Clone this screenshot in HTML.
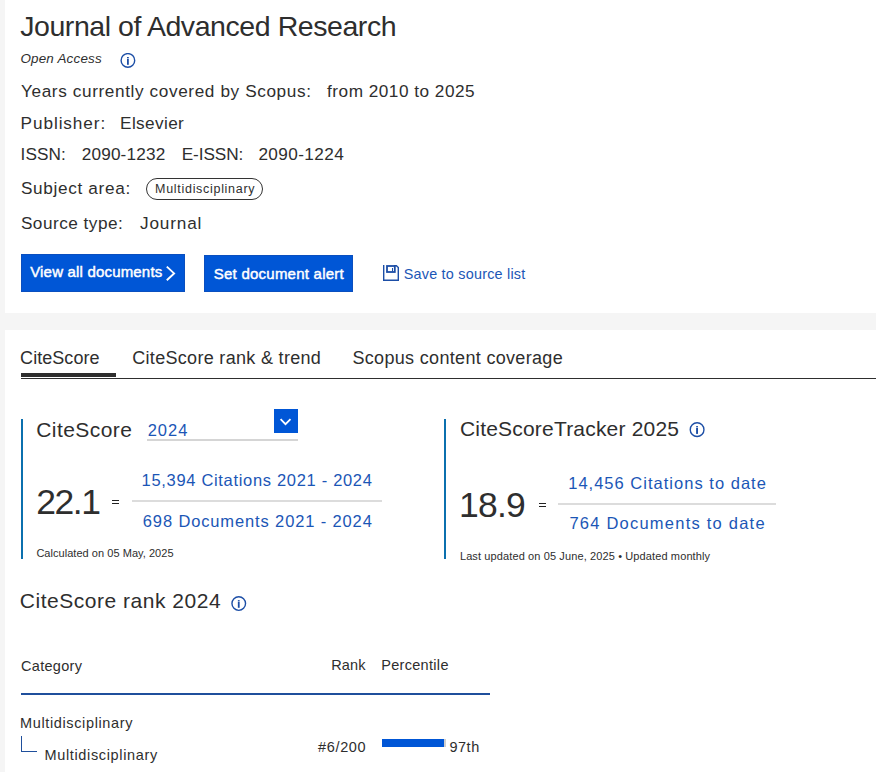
<!DOCTYPE html>
<html><head><meta charset="utf-8">
<style>
*{margin:0;padding:0;box-sizing:border-box}
html,body{width:876px;height:772px;overflow:hidden;background:#f5f5f5;font-family:"Liberation Sans",sans-serif;color:#2e2e2e}
.a{position:absolute}
.t{position:absolute;white-space:nowrap;line-height:1}
</style></head><body>
<div class="a" style="left:5px;top:0;width:871px;height:313px;background:#fff"></div>
<div class="a" style="left:5px;top:330px;width:871px;height:442px;background:#fff"></div>
<!-- pill -->
<div class="a" style="left:146px;top:178px;width:117px;height:22px;border:1px solid #333;border-radius:11px"></div>
<!-- buttons -->
<div class="a" style="left:21px;top:254px;width:164px;height:38px;background:#0056d6;box-shadow:inset 0 0 0 1px #0a4fbf"></div>
<div class="a" style="left:204px;top:255px;width:149px;height:37px;background:#0056d6;box-shadow:inset 0 0 0 1px #0a4fbf"></div>
<!-- tabs -->
<div class="a" style="left:21px;top:373px;width:95px;height:4px;background:#2e2e2e"></div>
<div class="a" style="left:21px;top:378px;width:855px;height:1px;background:#2e2e2e"></div>
<!-- citescore box -->
<div class="a" style="left:21px;top:419px;width:2px;height:140px;background:#0b70ae"></div>
<div class="a" style="left:147px;top:439px;width:151px;height:2px;background:#d5d5d5"></div>
<div class="a" style="left:274px;top:409px;width:24px;height:24px;background:#0056d6"></div>
<div class="a" style="left:132px;top:500px;width:250px;height:2px;background:#dcdcdc"></div>
<div class="a" style="left:444px;top:419px;width:2px;height:140px;background:#0b70ae"></div>
<div class="a" style="left:558px;top:503px;width:218px;height:2px;background:#dcdcdc"></div>
<!-- rank -->
<div class="a" style="left:21px;top:693px;width:469px;height:2px;background:#1f4f9c"></div>
<div class="a" style="left:382px;top:739px;width:62px;height:8px;background:#0056d6"></div>
<div class="a" style="left:444px;top:739px;width:1.5px;height:8px;background:#cfcfcf"></div>
<!-- equals -->
<div class="a" style="left:112.4px;top:500px;width:6.8px;height:1.1px;background:#222"></div>
<div class="a" style="left:112.4px;top:503px;width:6.8px;height:1.1px;background:#222"></div>
<div class="a" style="left:539px;top:503px;width:7px;height:1.1px;background:#222"></div>
<div class="a" style="left:539px;top:506px;width:7px;height:1.1px;background:#222"></div>
<!-- info icons -->
<svg class="a" style="left:120px;top:53px" width="16" height="16" viewBox="0 0 16 16"><circle cx="7.9" cy="7.4" r="6.8" fill="none" stroke="#1c4ea6" stroke-width="1.4"/><rect x="7" y="4" width="1.8" height="1" fill="#1c4ea6"/><rect x="7" y="5.6" width="1.8" height="6.2" fill="#1c4ea6"/></svg>
<svg class="a" style="left:689px;top:422px" width="16" height="16" viewBox="0 0 16 16"><circle cx="8.1" cy="7.65" r="6.85" fill="none" stroke="#1c4ea6" stroke-width="1.4"/><rect x="7.1" y="4.1" width="1.9" height="0.9" fill="#1c4ea6"/><rect x="7.1" y="5.6" width="1.9" height="6.3" fill="#1c4ea6"/></svg>
<svg class="a" style="left:231px;top:596px" width="16" height="16" viewBox="0 0 16 16"><circle cx="7.75" cy="7.55" r="6.8" fill="none" stroke="#1c4ea6" stroke-width="1.4"/><rect x="6.85" y="4" width="1.8" height="0.9" fill="#1c4ea6"/><rect x="6.85" y="5.5" width="1.8" height="6.3" fill="#1c4ea6"/></svg>
<!-- save icon -->
<svg class="a" style="left:378px;top:260px" width="26" height="26" viewBox="0 0 26 26"><path d="M5.7 5 V20.2 H20.3 V7.6 L18.4 5.7 H16" fill="none" stroke="#1c4ea6" stroke-width="1.4"/><rect x="9" y="6" width="7.8" height="6" fill="none" stroke="#1c4ea6" stroke-width="1.8"/><rect x="14" y="8" width="1" height="3.5" fill="#1c4ea6"/></svg>
<!-- chevrons -->
<svg class="a" style="left:155px;top:258px" width="30" height="30" viewBox="0 0 30 30"><path d="M11.8 8.6 L19.1 15.4 L11.8 22.3" fill="none" stroke="#fff" stroke-width="1.9"/></svg>
<svg class="a" style="left:270px;top:405px" width="32" height="32" viewBox="0 0 32 32"><path d="M10.6 14.2 L15.5 19.2 L20.5 14.2" fill="none" stroke="#fff" stroke-width="1.8"/></svg>
<!-- tree connector -->
<div class="a" style="left:21px;top:736px;width:1.1px;height:16px;background:#1f4f9c"></div>
<div class="a" style="left:21px;top:750.8px;width:16px;height:1.1px;background:#1f4f9c"></div>
<div id="title" class="t" style="left:20.20px;top:11.86px;font-size:28.5px;color:#2e2e2e;letter-spacing:-0.437px">Journal of Advanced Research</div>
<div id="oa" class="t" style="left:20.40px;top:51.65px;font-size:13.4px;color:#2e2e2e;letter-spacing:0.220px;font-style:italic">Open Access</div>
<div id="y1" class="t" style="left:21.00px;top:82.73px;font-size:17.2px;color:#2e2e2e;letter-spacing:0.612px">Years currently covered by Scopus:</div>
<div id="y2" class="t" style="left:327.10px;top:82.73px;font-size:17.2px;color:#2e2e2e;letter-spacing:0.500px">from 2010 to 2025</div>
<div id="p1" class="t" style="left:20.60px;top:115.13px;font-size:17.2px;color:#2e2e2e;letter-spacing:0.911px">Publisher:</div>
<div id="p2" class="t" style="left:120.10px;top:115.13px;font-size:17.2px;color:#2e2e2e;letter-spacing:0.371px">Elsevier</div>
<div id="i1" class="t" style="left:20.60px;top:146.43px;font-size:17.2px;color:#2e2e2e;letter-spacing:0.050px">ISSN:</div>
<div id="i2" class="t" style="left:81.70px;top:146.43px;font-size:17.2px;color:#2e2e2e;letter-spacing:0.175px">2090-1232</div>
<div id="i3" class="t" style="left:181.70px;top:146.43px;font-size:17.2px;color:#2e2e2e;letter-spacing:-0.067px">E-ISSN:</div>
<div id="i4" class="t" style="left:258.40px;top:146.43px;font-size:17.2px;color:#2e2e2e;letter-spacing:0.400px">2090-1224</div>
<div id="s1" class="t" style="left:20.90px;top:179.73px;font-size:17.2px;color:#2e2e2e;letter-spacing:0.667px">Subject area:</div>
<div id="pill" class="t" style="left:155.10px;top:182.81px;font-size:12.5px;color:#2e2e2e;letter-spacing:0.700px">Multidisciplinary</div>
<div id="st1" class="t" style="left:20.90px;top:215.03px;font-size:17.2px;color:#2e2e2e;letter-spacing:0.491px">Source type:</div>
<div id="st2" class="t" style="left:140.00px;top:215.03px;font-size:17.2px;color:#2e2e2e;letter-spacing:0.833px">Journal</div>
<div id="b1" class="t" style="left:30.20px;top:264.49px;font-size:15px;color:#ffffff;letter-spacing:0.182px;-webkit-text-stroke:0.45px #ffffff">View all documents</div>
<div id="b2" class="t" style="left:213.80px;top:265.69px;font-size:15px;color:#ffffff;letter-spacing:0.235px;-webkit-text-stroke:0.45px #ffffff">Set document alert</div>
<div id="sv" class="t" style="left:403.70px;top:266.90px;font-size:14.4px;color:#1b56b6;letter-spacing:0.222px">Save to source list</div>
<div id="t1" class="t" style="left:20.10px;top:348.85px;font-size:18px;color:#2e2e2e;letter-spacing:0.050px">CiteScore</div>
<div id="t2" class="t" style="left:132.20px;top:348.85px;font-size:18px;color:#2e2e2e;letter-spacing:0.314px">CiteScore rank &amp; trend</div>
<div id="t3" class="t" style="left:352.40px;top:348.85px;font-size:18px;color:#2e2e2e;letter-spacing:0.327px">Scopus content coverage</div>
<div id="c1" class="t" style="left:36.20px;top:418.81px;font-size:21px;color:#2e2e2e;letter-spacing:0.450px">CiteScore</div>
<div id="c2" class="t" style="left:147.70px;top:421.92px;font-size:16.5px;color:#1b56b6;letter-spacing:1.000px">2024</div>
<div id="c3" class="t" style="left:36.20px;top:484.73px;font-size:35.5px;color:#2e2e2e;letter-spacing:-1.467px">22.1</div>
<div id="c4" class="t" style="left:141.60px;top:472.02px;font-size:16.5px;color:#1b56b6;letter-spacing:0.681px">15,394 Citations 2021 - 2024</div>
<div id="c5" class="t" style="left:142.80px;top:512.72px;font-size:16.5px;color:#1b56b6;letter-spacing:0.867px">698 Documents 2021 - 2024</div>
<div id="c6" class="t" style="left:36.40px;top:547.78px;font-size:11px;color:#2e2e2e;letter-spacing:0.040px">Calculated on 05 May, 2025</div>
<div id="r1" class="t" style="left:460.00px;top:418.11px;font-size:21px;color:#2e2e2e;letter-spacing:0.190px">CiteScoreTracker 2025</div>
<div id="r2" class="t" style="left:459.10px;top:488.03px;font-size:35.5px;color:#2e2e2e;letter-spacing:-0.800px">18.9</div>
<div id="r3" class="t" style="left:568.20px;top:475.02px;font-size:16.5px;color:#1b56b6;letter-spacing:1.017px">14,456 Citations to date</div>
<div id="r4" class="t" style="left:569.40px;top:515.22px;font-size:16.5px;color:#1b56b6;letter-spacing:1.230px">764 Documents to date</div>
<div id="r5" class="t" style="left:459.90px;top:551.08px;font-size:11px;color:#2e2e2e;letter-spacing:0.117px">Last updated on 05 June, 2025 • Updated monthly</div>
<div id="k1" class="t" style="left:19.80px;top:589.51px;font-size:21px;color:#2e2e2e;letter-spacing:0.522px">CiteScore rank 2024</div>
<div id="h1" class="t" style="left:21.10px;top:658.62px;font-size:14.5px;color:#2e2e2e;letter-spacing:0.286px">Category</div>
<div id="h2" class="t" style="left:331.20px;top:658.22px;font-size:14.5px;color:#2e2e2e;letter-spacing:0.133px">Rank</div>
<div id="h3" class="t" style="left:381.20px;top:658.22px;font-size:14.5px;color:#2e2e2e;letter-spacing:0.311px">Percentile</div>
<div id="m1" class="t" style="left:20.10px;top:716.22px;font-size:14.5px;color:#2e2e2e;letter-spacing:0.625px">Multidisciplinary</div>
<div id="m2" class="t" style="left:44.50px;top:747.82px;font-size:14.5px;color:#2e2e2e;letter-spacing:0.650px">Multidisciplinary</div>
<div id="m3" class="t" style="left:318.10px;top:740.22px;font-size:14.5px;color:#2e2e2e;letter-spacing:0.640px">#6/200</div>
<div id="m4" class="t" style="left:449.40px;top:740.22px;font-size:14.5px;color:#2e2e2e;letter-spacing:0.533px">97th</div>
</body></html>
